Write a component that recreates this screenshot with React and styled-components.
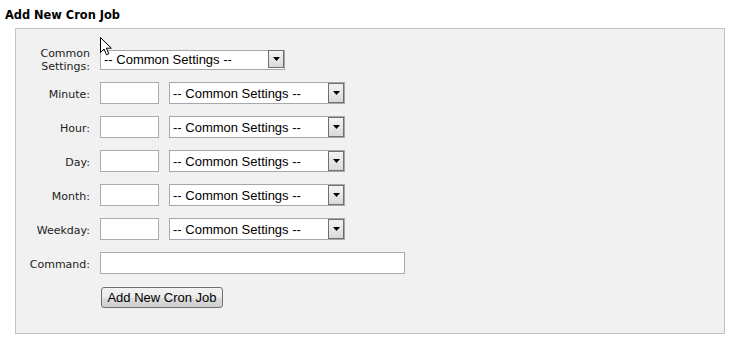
import React from 'react'
import styled, { createGlobalStyle } from 'styled-components'

const GlobalStyle = createGlobalStyle`
  html, body {
    margin: 0;
    padding: 0;
    background: #fff;
  }
  body {
    font-family: "DejaVu Sans", Verdana, sans-serif;
    color: #000;
  }
`

const Page = styled.div`
  position: relative;
  padding: 9px 5px 0 5px;
`

const Title = styled.h3`
  margin: 0 0 7px 0;
  font-size: 11.4px;
  line-height: 12px;
  font-weight: bold;
`

const Panel = styled.div`
  margin-left: 10px;
  width: 710px;
  height: 306px;
  box-sizing: border-box;
  background: #f1f1f1;
  border: 1px solid #b9c9c1;
  padding: 13px 10px 0 10px;
`

const Form = styled.div`
  display: grid;
  grid-template-columns: 64px 1fr;
  grid-auto-rows: 34px;
  column-gap: 10px;
  align-items: center;
`

const Label = styled.label`
  font-size: 11px;
  line-height: 13px;
  padding-top: 2px;
  text-align: right;
  color: #222;
`

const Controls = styled.div`
  display: flex;
  align-items: center;
  gap: 10px;
`

const TextInput = styled.input`
  box-sizing: border-box;
  width: ${p => p.$w}px;
  height: 22px;
  margin: 0;
  padding: 1px 3px;
  background: #fff;
  border: 1px solid #a9adb2;
  font-family: "Liberation Sans", Arial, sans-serif;
  font-size: 13px;
`

const SelectWrap = styled.div`
  position: relative;
  width: ${p => p.$w}px;
  height: ${p => p.$h}px;
`

const Select = styled.select`
  appearance: none;
  -webkit-appearance: none;
  box-sizing: border-box;
  width: 100%;
  height: 100%;
  margin: 0;
  padding: 0 0 0 3px;
  background: #fff;
  border: 1px solid #a5a9ad;
  border-radius: 0;
  font-family: "Liberation Sans", Arial, sans-serif;
  font-size: 13px;
  color: #000;
`

const ArrowBox = styled.span`
  position: absolute;
  top: 1px;
  right: 1px;
  bottom: 1px;
  width: 16px;
  box-sizing: border-box;
  border: 1px solid #6f6f6f;
  background: linear-gradient(#f4f4f4, #d9d9d9);
  display: flex;
  align-items: center;
  justify-content: center;
  pointer-events: none;
`

const Button = styled.button`
  box-sizing: border-box;
  width: 122px;
  height: 21px;
  margin-left: 1px;
  padding: 0;
  border: 1px solid #707070;
  border-radius: 3px;
  background: linear-gradient(#f2f2f2 0%, #ebebeb 50%, #dddddd 51%, #cfcfcf 100%);
  font-family: "Liberation Sans", Arial, sans-serif;
  font-size: 13px;
  color: #000;
`

const Cursor = styled.svg`
  position: absolute;
  left: 100px;
  top: 37px;
`

const CommonSelect = ({ w = 176, h = 22 }) => (
  <SelectWrap $w={w} $h={h}>
    <Select defaultValue="">
      <option value="">-- Common Settings --</option>
    </Select>
    <ArrowBox>
      <svg width="7" height="4" viewBox="0 0 7 4">
        <path d="M0 0 H7 L3.5 4 Z" fill="#000" />
      </svg>
    </ArrowBox>
  </SelectWrap>
)

const fields = ['Minute', 'Hour', 'Day', 'Month', 'Weekday']

export default function App() {
  return (
    <>
      <GlobalStyle />
      <Page>
        <Title>Add New Cron Job</Title>
        <Panel>
          <Form>
            <Label>Common Settings:</Label>
            <Controls>
              <CommonSelect w={185} h={20} />
            </Controls>
            {fields.map(f => (
              <React.Fragment key={f}>
                <Label>{f}:</Label>
                <Controls>
                  <TextInput $w={59} />
                  <CommonSelect />
                </Controls>
              </React.Fragment>
            ))}
            <Label>Command:</Label>
            <Controls>
              <TextInput $w={305} />
            </Controls>
            <span />
            <Controls>
              <Button>Add New Cron Job</Button>
            </Controls>
          </Form>
        </Panel>
        <Cursor width="13" height="19" viewBox="0 0 13 19">
          <path
            d="M0.5 0.5 L0.5 15.5 L4 12 L6.5 17.8 L8.8 16.8 L6.4 11.2 L11.3 11.2 Z"
            fill="#fff"
            stroke="#000"
            strokeWidth="1"
            strokeLinejoin="miter"
          />
        </Cursor>
      </Page>
    </>
  )
}
